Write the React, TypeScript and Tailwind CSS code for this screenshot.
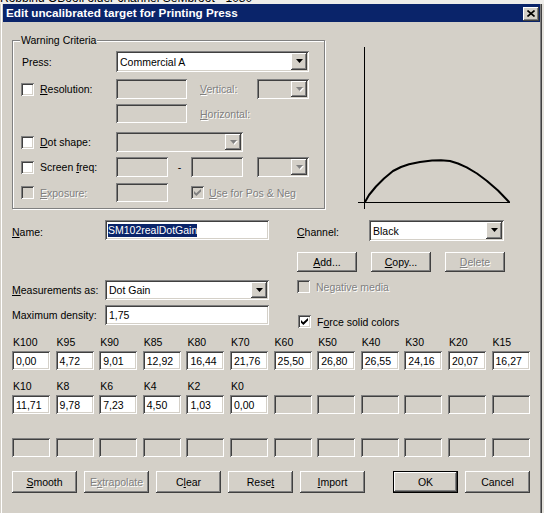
import React from 'react';

const sunken =
  'shadow-[inset_1px_1px_0_#808080,inset_-1px_-1px_0_#ffffff,inset_2px_2px_0_#404040,inset_-2px_-2px_0_#d4d0c8]';
const raised =
  'shadow-[inset_-1px_-1px_0_#404040,inset_1px_1px_0_#ffffff,inset_-2px_-2px_0_#808080,inset_2px_2px_0_#d4d0c8]';
const grey = 'text-[#808080] [text-shadow:1px_1px_0_#ffffff]';

function U({ children }: { children: React.ReactNode }) {
  return <span className="underline underline-offset-[1px]">{children}</span>;
}

function Edit({ className = '', disabled = false, children }: { className?: string; disabled?: boolean; children?: React.ReactNode }) {
  return (
    <div className={`${sunken} ${disabled ? 'bg-[#d4d0c8]' : 'bg-white'} flex items-center whitespace-nowrap overflow-hidden ${className}`}>
      {children}
    </div>
  );
}

function Arrow({ disabled = false }: { disabled?: boolean }) {
  return (
    <svg width="8" height="5" viewBox="0 0 8 5">
      {disabled && <polygon points="1,1 8,1 4.5,5" fill="#ffffff" />}
      <polygon points="0,0 7,0 3.5,4" fill={disabled ? '#808080' : '#000000'} />
    </svg>
  );
}

function Combo({ className = '', value = '', disabled = false }: { className?: string; value?: string; disabled?: boolean }) {
  return (
    <div className={`${sunken} ${disabled ? 'bg-[#d4d0c8]' : 'bg-white'} flex p-[2px] ${className}`}>
      <div className="flex-1 flex items-center pl-[2px] whitespace-nowrap">{value}</div>
      <div className={`${raised} bg-[#d4d0c8] w-[16px] flex items-center justify-center pl-[1px]`}>
        <Arrow disabled={disabled} />
      </div>
    </div>
  );
}

function Check({ checked = false, disabled = false }: { checked?: boolean; disabled?: boolean }) {
  return (
    <div className={`${sunken} ${disabled ? 'bg-[#d4d0c8]' : 'bg-white'} w-[13px] h-[13px] shrink-0 flex items-center justify-center`}>
      {checked && (
        <svg width="7" height="7" viewBox="0 0 7 7">
          <polygon points="0,2 2.2,4.2 7,0 7,2.6 2.4,7 0,4.8" fill={disabled ? '#808080' : '#000000'} />
        </svg>
      )}
    </div>
  );
}

function Btn({ className = '', disabled = false, def = false, children }: { className?: string; disabled?: boolean; def?: boolean; children: React.ReactNode }) {
  return (
    <div className={`${def ? 'border border-black' : ''} bg-[#d4d0c8] ${className}`}>
      <div className={`${raised} h-full flex items-center justify-center ${disabled ? grey : ''}`}>{children}</div>
    </div>
  );
}

const row1 = [
  ['K100', '0,00'], ['K95', '4,72'], ['K90', '9,01'], ['K85', '12,92'], ['K80', '16,44'], ['K70', '21,76'],
  ['K60', '25,50'], ['K50', '26,80'], ['K40', '26,55'], ['K30', '24,16'], ['K20', '20,07'], ['K15', '16,27'],
];
const row2 = [['K10', '11,71'], ['K8', '9,78'], ['K6', '7,23'], ['K4', '4,50'], ['K2', '1,03'], ['K0', '0,00']];
const blanks = Array.from({ length: 12 }, (_, i) => i);

export default function App() {
  return (
    <div className="w-[544px] h-[513px] overflow-hidden bg-[#e4e2dc] font-['Liberation_Sans',Arial,sans-serif] text-[10.5px] leading-[12px] text-black">
      <div className="h-[4px] overflow-hidden bg-[#eeedea]">
        <div className="-mt-[8px] text-[12px] leading-[12px] whitespace-nowrap">Robbind OBooll older channel SeMbroot - 1080</div>
      </div>

      <div className="w-[542px] h-[509px] bg-[#d4d0c8] flex flex-col pl-[3px] pr-[2px] shadow-[inset_-1px_0_0_#404040,inset_-2px_0_0_#808080,inset_1px_0_0_#d4d0c8,inset_2px_0_0_#ffffff]">
        {/* title bar */}
        <div className="h-[18px] shrink-0 bg-[#0a246a] flex items-center pl-[3px] pr-[1px]">
          <span className="text-white font-bold text-[11.7px] leading-[14px] whitespace-nowrap">Edit uncalibrated target for Printing Press</span>
          <div className={`${raised} ml-auto mt-[1px] w-[16px] h-[14px] bg-[#d4d0c8] flex items-center justify-center`}>
            <svg width="8" height="7" viewBox="0 0 8 7">
              <path d="M0.5 0.5 L7.5 6.5 M7.5 0.5 L0.5 6.5" stroke="#000" strokeWidth="1.6" />
            </svg>
          </div>
        </div>

        <div className="flex-1 pl-[9px] pt-[18px]">
          {/* warning criteria + graph */}
          <div className="flex items-start">
            <div className="relative w-[313px] border border-[#808080] shadow-[inset_1px_1px_0_#ffffff,1px_1px_0_#ffffff] px-[8px] pt-[10px] pb-[6px]">
              <span className="absolute -top-[7px] left-[7px] px-[1px] bg-[#d4d0c8]">Warning Criteria</span>

              <div className="flex items-center h-[21px]">
                <div className="w-[95px] pl-[1px]">Press:</div>
                <Combo className="w-[193px] h-[21px]" value="Commercial A" />
              </div>

              <div className="flex items-center h-[20px] mt-[7px]">
                <div className="w-[95px] flex items-center gap-[6px]">
                  <Check />
                  <span><U>R</U>esolution:</span>
                </div>
                <Edit disabled className="w-[71px] h-[20px]" />
                <div className={`w-[70px] pl-[13px] ${grey}`}><U>V</U>ertical:</div>
                <Combo disabled className="w-[52px] h-[20px]" />
              </div>

              <div className="flex items-center h-[19px] mt-[5px]">
                <div className="w-[95px]" />
                <Edit disabled className="w-[71px] h-[19px]" />
                <div className={`w-[70px] pl-[13px] ${grey}`}><U>H</U>orizontal:</div>
              </div>

              <div className="flex items-center h-[20px] mt-[9px]">
                <div className="w-[95px] flex items-center gap-[6px]">
                  <Check />
                  <span><U>D</U>ot shape:</span>
                </div>
                <Combo disabled className="w-[127px] h-[20px]" />
              </div>

              <div className="flex items-center h-[20px] mt-[5px]">
                <div className="w-[95px] flex items-center gap-[6px]">
                  <Check />
                  <span>Screen <U>f</U>req:</span>
                </div>
                <Edit disabled className="w-[52px] h-[20px]" />
                <div className="w-[23px] text-center">-</div>
                <Edit disabled className="w-[52px] h-[20px]" />
                <div className="w-[14px]" />
                <Combo disabled className="w-[52px] h-[20px]" />
              </div>

              <div className="flex items-center h-[19px] mt-[6px]">
                <div className="w-[95px] flex items-center gap-[6px]">
                  <Check disabled />
                  <span className={grey}><U>E</U>xposure:</span>
                </div>
                <Edit disabled className="w-[52px] h-[19px]" />
                <div className="w-[23px]" />
                <Check checked disabled />
                <span className={`ml-[5px] ${grey}`}><U>U</U>se for Pos &amp; Neg</span>
              </div>
            </div>

            <svg className="ml-[15px]" width="190" height="170" viewBox="0 0 190 170">
              <line x1="24.5" y1="7" x2="24.5" y2="169" stroke="#000" strokeWidth="1" />
              <line x1="18" y1="162.5" x2="170" y2="162.5" stroke="#000" strokeWidth="1" />
              <polyline
                points="25,162 29,155 36,146.5 44,138.5 53,131 61,127 69,124.3 80,122 92,120.5 101,120.3 110,121 118,123.5 126.7,127.3 137,133.5 146.7,140.7 158,150.5 169.3,162.3"
                fill="none"
                stroke="#000"
                strokeWidth="2"
                strokeLinejoin="round"
              />
            </svg>
          </div>

          {/* name / channel */}
          <div className="flex mt-[10px]">
            <div className="w-[257px] flex flex-col">
              <div className="flex items-center h-[20px]">
                <div className="w-[93px] pt-[4px]"><U>N</U>ame:</div>
                <Edit className="w-[164px] h-[20px] pl-[3px]">
                  <span className="bg-[#0a246a] text-white leading-[13px]">SM102realDotGain</span>
                </Edit>
              </div>
              <div className="flex items-center h-[20px] mt-[40px]">
                <div className="w-[93px]"><U>M</U>easurements as:</div>
                <Combo className="w-[164px] h-[20px]" value="Dot Gain" />
              </div>
              <div className="flex items-center h-[20px] mt-[5px]">
                <div className="w-[93px]">Maximum density:</div>
                <Edit className="w-[164px] h-[20px] pl-[4px]">1,75</Edit>
              </div>
            </div>

            <div className="ml-[28px] flex flex-col">
              <div className="flex items-center h-[21px]">
                <div className="w-[72px] pt-[3px]"><U>C</U>hannel:</div>
                <Combo className="w-[135px] h-[21px]" value="Black" />
              </div>
              <div className="flex gap-[14px] mt-[11px]">
                <Btn className="w-[60px] h-[20px]"><U>A</U>dd...</Btn>
                <Btn className="w-[60px] h-[20px]"><U>C</U>opy...</Btn>
                <Btn disabled className="w-[60px] h-[20px]"><U>D</U>elete</Btn>
              </div>
              <div className="flex items-center mt-[8px]">
                <Check disabled />
                <span className={`ml-[6px] ${grey}`}>Negative media</span>
              </div>
              <div className="flex items-center mt-[22px] pl-[1px]">
                <Check checked />
                <span className="ml-[6px]">F<U>o</U>rce solid colors</span>
              </div>
            </div>
          </div>

          {/* value table */}
          <div className="mt-[8px] grid grid-cols-[repeat(12,38px)] gap-x-[5.6px]">
            {row1.map(([k]) => (
              <div key={k} className="h-[12px] pl-[1px]">{k}</div>
            ))}
          </div>
          <div className="mt-[3px] grid grid-cols-[repeat(12,38px)] gap-x-[5.6px]">
            {row1.map(([k, v]) => (
              <Edit key={k} className="h-[19px] pl-[4px]">{v}</Edit>
            ))}
          </div>
          <div className="mt-[10px] grid grid-cols-[repeat(12,38px)] gap-x-[5.6px]">
            {row2.map(([k]) => (
              <div key={k} className="h-[12px] pl-[1px]">{k}</div>
            ))}
          </div>
          <div className="mt-[3px] grid grid-cols-[repeat(12,38px)] gap-x-[5.6px]">
            {row2.map(([k, v]) => (
              <Edit key={k} className="h-[19px] pl-[4px]">{v}</Edit>
            ))}
            {blanks.slice(6).map((i) => (
              <Edit key={i} disabled className="h-[19px]" />
            ))}
          </div>
          <div className="mt-[24px] grid grid-cols-[repeat(12,38px)] gap-x-[5.6px]">
            {blanks.map((i) => (
              <Edit key={i} disabled className="h-[19px]" />
            ))}
          </div>

          {/* buttons */}
          <div className="flex mt-[14px]">
            <div className="flex gap-[7px]">
              <Btn className="w-[65px] h-[22px]"><U>S</U>mooth</Btn>
              <Btn disabled className="w-[65px] h-[22px]">E<U>x</U>trapolate</Btn>
              <Btn className="w-[65px] h-[22px]">C<U>l</U>ear</Btn>
              <Btn className="w-[65px] h-[22px]">Rese<U>t</U></Btn>
              <Btn className="w-[65px] h-[22px]"><U>I</U>mport</Btn>
            </div>
            <div className="flex gap-[7px] ml-[28px]">
              <Btn def className="w-[65px] h-[22px]">OK</Btn>
              <Btn className="w-[65px] h-[22px]">Cancel</Btn>
            </div>
          </div>
        </div>
      </div>
    </div>
  );
}
